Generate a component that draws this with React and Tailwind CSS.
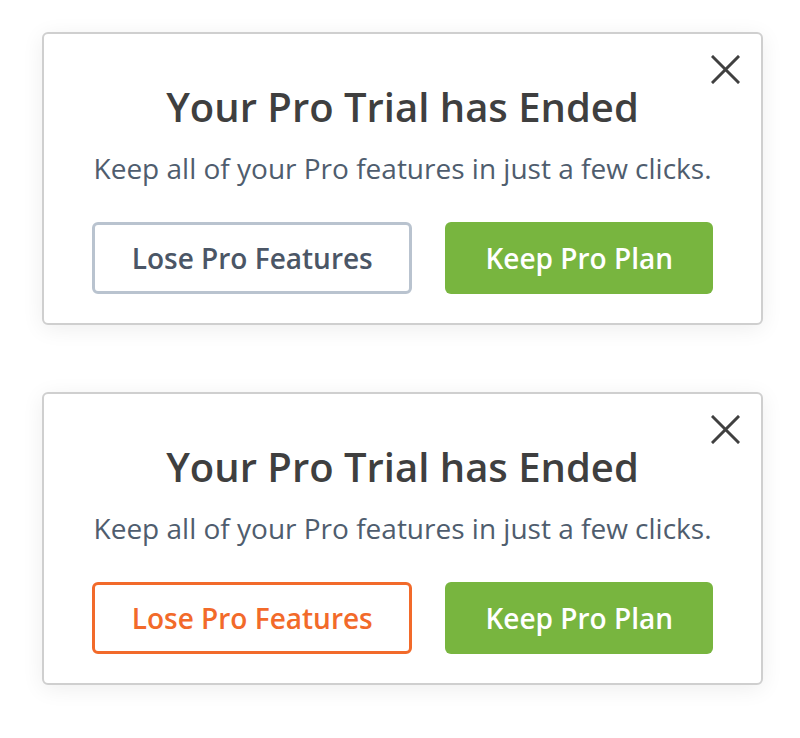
import React from "react";

const CloseIcon = () => (
  <svg width="29" height="29" viewBox="0 0 29 29" fill="none">
    <path d="M2 2L27 27M27 2L2 27" stroke="#404040" strokeWidth="3" strokeLinecap="square" />
  </svg>
);

const TrialCard = ({ variant }) => {
  const loseClass =
    variant === "orange"
      ? "border-[#f26a2a] text-[#f26a2a]"
      : "border-[#b9c3cf] text-[#4b5666]";

  return (
    <div className="relative w-[721px] rounded-[6px] border-2 border-[#cfcfcf] bg-white pt-[49px] pb-[29px] px-12 shadow-[0_4px_22px_rgba(0,0,0,0.07)]">
      <button className="absolute top-[21px] right-[21px]">
        <CloseIcon />
      </button>
      <h2 className="text-center text-[40px] leading-[48px] font-semibold text-[#3f3f3f]">
        Your Pro Trial has Ended
      </h2>
      <p className="mt-[18px] text-center text-[28px] leading-[39px] text-[#4f5d6e]">
        Keep all of your Pro features in just a few clicks.
      </p>
      <div className="mt-[34px] flex justify-center gap-[33px]">
        <button
          className={`h-[72px] w-[321px] rounded-[6px] border-[3px] bg-white text-[28px] font-semibold ${loseClass}`}
        >
          Lose Pro Features
        </button>
        <button className="h-[72px] w-[268px] rounded-[6px] bg-[#78b53f] text-[28px] font-semibold text-white">
          Keep Pro Plan
        </button>
      </div>
    </div>
  );
};

export default function App() {
  return (
    <div
      className="min-h-[738px] bg-white pt-[32px] pl-[42px] flex flex-col gap-[67px]"
      style={{ fontFamily: '"Open Sans", "Noto Sans", sans-serif' }}
    >
      <TrialCard variant="gray" />
      <TrialCard variant="orange" />
    </div>
  );
}
